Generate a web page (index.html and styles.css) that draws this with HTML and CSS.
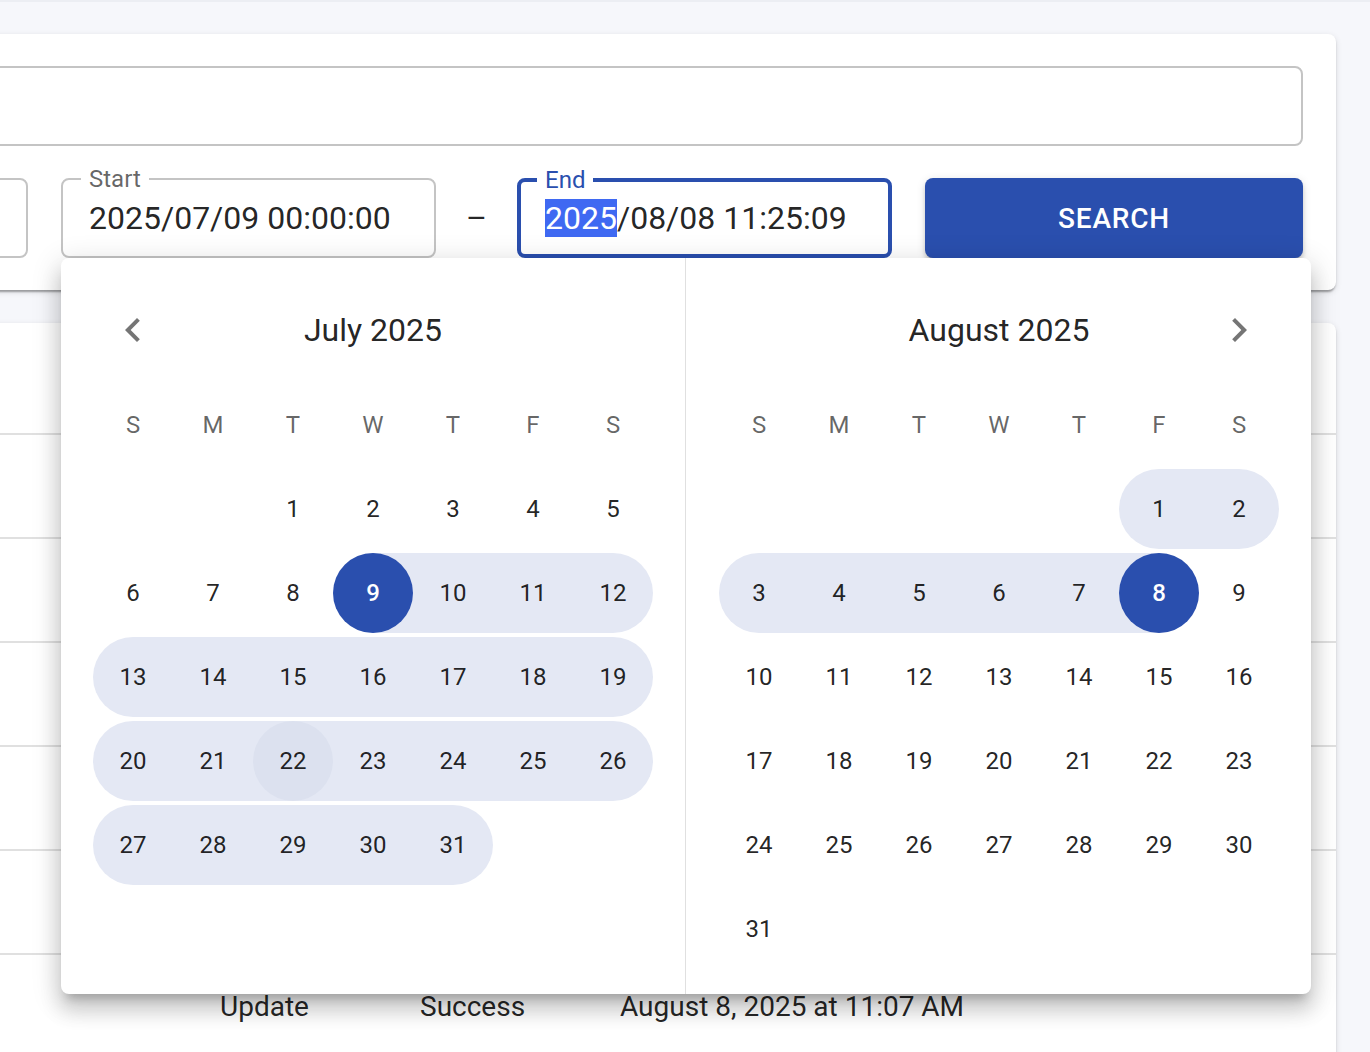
FILE: index.html
```html
<!DOCTYPE html>
<html lang="en">
<head>
  <meta charset="UTF-8" />
  <meta name="viewport" content="width=device-width, initial-scale=1" />
  <title>Audit Log</title>
  <link rel="stylesheet" href="styles.css">
</head>
<body>

  <div class="app-bar"></div>

  <main class="content">
    <section class="card filter-card">
      <div class="field search-field"></div>

      <div class="filter-row">
        <div class="field status-field"></div>

        <div class="field date-field">
          <label class="field-label">Start</label>
          <span class="field-value">2025/07/09 00:00:00</span>
        </div>

        <div class="dash">–</div>

        <div class="field date-field focused">
          <label class="field-label">End</label>
          <span class="field-value"><span class="selected-text">2025</span>/08/08 11:25:09</span>
        </div>

        <button class="search-btn">SEARCH</button>
      </div>
    </section>

    <section class="card table-card">
      <div class="table-row table-head"></div>
      <div id="logRows"></div>
    </section>
  </main>

  <!-- date range popup -->
  <div class="picker">
    <div class="month-panel first">
      <div class="month-header">
        <button class="arrow">
          <svg viewBox="0 0 24 24"><path d="M15.41 16.59 10.83 12l4.58-4.59L14 6l-6 6 6 6 1.41-1.41z"/></svg>
        </button>
        <div class="month-title">July 2025</div>
        <span></span>
      </div>
      <div class="weekdays"></div>
      <div class="days" id="julyDays"></div>
    </div>

    <div class="month-panel second">
      <div class="month-header">
        <span></span>
        <div class="month-title">August 2025</div>
        <button class="arrow">
          <svg viewBox="0 0 24 24"><path d="M10 6 8.59 7.41 13.17 12l-4.58 4.59L10 18l6-6z"/></svg>
        </button>
      </div>
      <div class="weekdays"></div>
      <div class="days" id="augustDays"></div>
    </div>
  </div>

  <script>
    // rows above the last one sit under the open picker
    const logs = [
      null, null, null, null, null,
      { action: "Update", status: "Success", time: "August 8, 2025 at 11:07 AM" }
    ];

    const rangeStart = new Date(2025, 6, 9);
    const rangeEnd = new Date(2025, 7, 8);
    const today = new Date(2025, 6, 22);

    function renderLogs() {
      const list = document.getElementById("logRows");
      logs.forEach(log => {
        if (!log) {
          list.innerHTML += `<div class="table-row"></div>`;
          return;
        }
        list.innerHTML += `
          <div class="table-row">
            <div></div>
            <div>${log.action}</div>
            <div>${log.status}</div>
            <div>${log.time}</div>
          </div>
        `;
      });
    }

    function inRange(date) {
      return date && date >= rangeStart && date <= rangeEnd;
    }

    function sameDay(a, b) {
      return a && b && a.getTime() === b.getTime();
    }

    function renderMonth(id, year, month) {
      const container = document.getElementById(id);
      const offset = new Date(year, month, 1).getDay();
      const count = new Date(year, month + 1, 0).getDate();
      const cells = [];

      for (let i = 0; i < offset; i++) cells.push(null);
      for (let d = 1; d <= count; d++) cells.push(new Date(year, month, d));
      while (cells.length % 7) cells.push(null);

      for (let w = 0; w < cells.length; w += 7) {
        let html = "";
        for (let c = 0; c < 7; c++) {
          const date = cells[w + c];
          if (!date) {
            html += `<div class="day-cell"></div>`;
            continue;
          }
          let cls = "day-cell";
          if (inRange(date)) {
            cls += " in-range";
            if (c === 0 || !inRange(cells[w + c - 1])) cls += " band-start";
            if (c === 6 || !inRange(cells[w + c + 1])) cls += " band-end";
          }
          let dayCls = "day";
          if (sameDay(date, rangeStart) || sameDay(date, rangeEnd)) dayCls += " selected";
          else if (sameDay(date, today)) dayCls += " today";
          html += `<div class="${cls}"><span class="${dayCls}">${date.getDate()}</span></div>`;
        }
        container.innerHTML += `<div class="week">${html}</div>`;
      }
    }

    document.querySelectorAll(".weekdays").forEach(row => {
      ["S", "M", "T", "W", "T", "F", "S"].forEach(letter => {
        row.innerHTML += `<span>${letter}</span>`;
      });
    });

    renderLogs();
    renderMonth("julyDays", 2025, 6);
    renderMonth("augustDays", 2025, 7);
  </script>

</body>
</html>
```

FILE: styles.css
```css
body {
  margin: 0;
  height: 1052px;
  overflow: hidden;
  position: relative;
  background: #f6f7fb;
  font-family: Roboto, 'Liberation Sans', sans-serif;
  color: rgba(0, 0, 0, 0.87);
}

.app-bar {
  height: 2px;
  background: #eceef3;
}

/* cards start off the left edge of the window */
.content {
  margin-left: -60px;
  width: 1396px;
  padding-top: 32px;
  display: flex;
  flex-direction: column;
  gap: 33px;
}

.card {
  background: #fff;
  border-radius: 8px;
  box-shadow: 0 4px 2px -2px rgba(0, 0, 0, 0.2),
              0 2px 2px 0 rgba(0, 0, 0, 0.14),
              0 2px 6px 0 rgba(0, 0, 0, 0.12);
}

.filter-card {
  padding: 32px 33px 32px 32px;
  display: flex;
  flex-direction: column;
  gap: 32px;
}

/* outlined text fields */
.field {
  position: relative;
  box-sizing: border-box;
  height: 80px;
  border: 2px solid #c4c4c4;
  border-radius: 8px;
  padding: 0 26px;
  display: flex;
  align-items: center;
}

.filter-row {
  display: flex;
  align-items: center;
}

.status-field {
  flex: 1;
  margin-right: 33px;
}

.date-field {
  width: 375px;
}

.field-label {
  position: absolute;
  top: -13px;
  left: 18px;
  padding: 0 8px;
  background: #fff;
  font-size: 24px;
  line-height: 24px;
  color: rgba(0, 0, 0, 0.6);
}

.field-value {
  font-size: 32px;
  line-height: 46px;
  white-space: nowrap;
}

.selected-text {
  background: #3f69f2;
  color: #fff;
}

.field.focused {
  border: 4px solid #2a4fae;
  padding: 0 24px;
}

.field.focused .field-label {
  top: -14px;
  left: 16px;
  color: #2a4fae;
}

.dash {
  width: 81px;
  text-align: center;
  font-size: 32px;
}

.search-btn {
  margin-left: 33px;
  width: 378px;
  height: 80px;
  border: none;
  border-radius: 8px;
  background: #2a4fae;
  color: #fff;
  font-family: inherit;
  font-size: 28px;
  font-weight: 500;
  letter-spacing: 0.8px;
  box-shadow: 0 6px 2px -4px rgba(0, 0, 0, 0.2),
              0 4px 4px 0 rgba(0, 0, 0, 0.14),
              0 2px 10px 0 rgba(0, 0, 0, 0.12);
}

/* log table */
.table-card {
  height: 900px;
}

.table-row {
  display: grid;
  grid-template-columns: 248px 200px 200px 1fr;
  align-items: center;
  height: 102px;
  border-bottom: 2px solid #e0e0e0;
  font-size: 28px;
}

.table-row > div {
  padding-left: 32px;
}

.table-head {
  height: 110px;
}

/* date range picker popup */
.picker {
  position: absolute;
  left: 61px;
  top: 258px;
  width: 1250px;
  height: 736px;
  display: flex;
  background: #fff;
  border-radius: 8px;
  box-shadow: 0 10px 10px -6px rgba(0, 0, 0, 0.2),
              0 16px 20px 2px rgba(0, 0, 0, 0.14),
              0 6px 28px 4px rgba(0, 0, 0, 0.12);
}

.month-panel {
  padding: 32px 32px 25px 32px;
}

.month-panel.first {
  border-right: 1px solid #e0e0e0;
}

.month-panel.second {
  padding-left: 33px;
}

.month-header {
  display: grid;
  grid-template-columns: 80px 1fr 80px;
  align-items: center;
  height: 80px;
}

.month-title {
  text-align: center;
  font-size: 32px;
}

.arrow {
  width: 80px;
  height: 80px;
  padding: 0;
  border: none;
  background: none;
  display: flex;
  align-items: center;
  justify-content: center;
}

.arrow svg {
  width: 48px;
  height: 48px;
  fill: #757575;
}

.weekdays,
.week {
  display: grid;
  grid-template-columns: repeat(7, 80px);
}

.weekdays {
  margin-top: 15px;
  height: 80px;
  align-items: center;
  text-align: center;
  font-size: 24px;
  color: rgba(0, 0, 0, 0.6);
}

.days {
  margin-top: 4px;
  display: flex;
  flex-direction: column;
  gap: 4px;
}

.day-cell {
  height: 80px;
}

.day-cell.in-range {
  background: #e4e8f4;
}

.day-cell.band-start {
  border-top-left-radius: 40px;
  border-bottom-left-radius: 40px;
}

.day-cell.band-end {
  border-top-right-radius: 40px;
  border-bottom-right-radius: 40px;
}

.day {
  width: 80px;
  height: 80px;
  border-radius: 50%;
  display: flex;
  align-items: center;
  justify-content: center;
  font-size: 24px;
}

.day.selected {
  background: #2a4fae;
  color: #fff;
  font-weight: 500;
}

.day.today {
  background: #dce1ef;
}
```
